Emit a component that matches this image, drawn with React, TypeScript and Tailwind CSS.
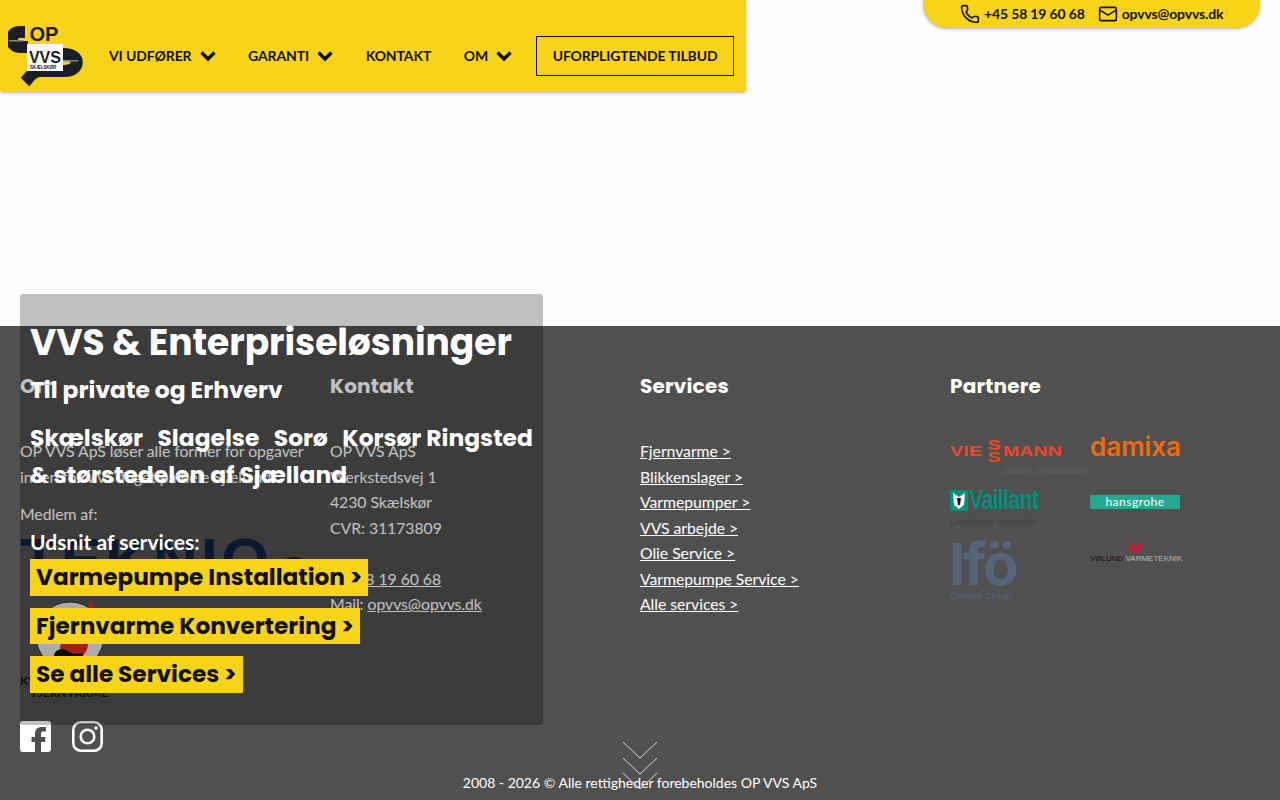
import { Mail, Phone } from 'lucide-react'

const NAV = [
  { label: 'VI UDFØRER', menu: true },
  { label: 'GARANTI', menu: true },
  { label: 'KONTAKT', menu: false },
  { label: 'OM', menu: true },
]

const SERVICES = [
  'Fjernvarme >',
  'Blikkenslager >',
  'Varmepumper >',
  'VVS arbejde >',
  'Olie Service >',
  'Varmepumpe Service >',
  'Alle services >',
]

const HEADING = "font-['Poppins',sans-serif] text-[20px] leading-[30px] font-bold tracking-[0.2px] text-white"
const CTA = "self-start bg-[#f8d419] px-1.5 font-['Poppins',sans-serif] text-[23.2px] leading-[36.5px] font-bold whitespace-nowrap text-[#111]"

function Chevron() {
  return (
    <svg viewBox="0 0 16 12" className="h-[12px] w-[16px]" fill="none" stroke="#111" strokeWidth="3.4">
      <path d="M1.5 2.5 L8 9 L14.5 2.5" />
    </svg>
  )
}

function Logo() {
  return (
    <svg viewBox="0 0 76 62" className="h-[62px] w-[76px] shrink-0">
      <path d="M17 7 H12 C0 7 2 22 12 22 H20" fill="none" stroke="#1d1d26" strokeWidth="12" />
      <path d="M47 29 H56 C73 29 73 46 56 46 H32 C24 46 21 53 17 57" fill="none" stroke="#1d1d26" strokeWidth="12" />
      <rect x="1" y="15" width="14" height="1.5" fill="#888" />
      <rect x="55" y="35" width="15" height="1.5" fill="#888" />
      <text x="21.5" y="16" fontFamily="Liberation Sans" fontWeight="700" fontSize="20" fill="#1d1d26">OP</text>
      <rect x="19" y="19" width="36" height="27" fill="#fff" />
      <text x="21" y="38" fontFamily="Liberation Sans" fontWeight="700" fontSize="16" fill="#1d1d26">VVS</text>
      <text x="22" y="43.5" fontFamily="Liberation Sans" fontWeight="700" fontSize="4.6" fill="#1d1d26">SKÆLSKØR</text>
    </svg>
  )
}

function Partners() {
  return (
    <div className="mt-[37px] grid w-[230px] grid-cols-[140px_90px] font-['Liberation_Sans',sans-serif] tracking-normal">
      <div className="h-[52px]">
        <div className="flex h-[25px] items-center text-[14px] leading-[14px] font-bold text-[#f2462a]">
          <span className="inline-block w-[33px] origin-left scale-x-[1.4] tracking-[0.2px]">VIE</span>
          <span className="ml-[5px] flex w-[12px] scale-x-[1.4] flex-col text-center leading-[12px]">
            <span>S</span>
            <span>S</span>
          </span>
          <span className="ml-[3px] inline-block w-[59px] origin-left scale-x-[1.4]">MANN</span>
        </div>
        <div className="mt-[2px] pl-[52px] text-[9.6px] leading-[12px] whitespace-nowrap text-[#5e5e5e]">climate of innovation</div>
      </div>
      <div className="h-[52px] font-['Inter',sans-serif] text-[26px] leading-[18px] font-semibold text-[#ef6c0f]">damixa</div>
      <div className="h-[52px]">
        <div className="flex items-center gap-[1px]">
          <svg viewBox="0 0 18 21" className="h-[21px] w-[18px]">
            <rect width="18" height="21" fill="#00917a" />
            <path d="M3 3 L9 7 L15 3 L14 15 L9 19 L4 15 Z" fill="#fff" />
            <path d="M7 8 H11 L10 15 H8 Z" fill="#111" />
          </svg>
          <span className="inline-block origin-left scale-x-[0.8] text-[27px] leading-[21px] font-bold tracking-[-1px] text-[#00917a]">Vaillant</span>
        </div>
        <div className="mt-[6px] text-[9px] leading-[10px] whitespace-nowrap text-[#444]">Certificeret forhandler</div>
      </div>
      <div className="flex h-[52px] items-start pt-[5px]">
        <div className="h-[14px] w-[90px] bg-[#26a88f] text-center font-['Lato',sans-serif] text-[12px] leading-[13px] tracking-[0.5px] text-white">hansgrohe</div>
      </div>
      <div>
        <div className="-ml-[1px] font-['Inter',sans-serif] text-[58px] leading-[44px] font-bold tracking-[-2px] text-[#56647c]">Ifö</div>
        <div className="mt-[3px] text-[9.7px] leading-[14px] text-[#55647d]">Geberit Group</div>
      </div>
      <div className="flex flex-col items-center">
        <svg viewBox="0 0 14 12" className="h-[12px] w-[14px]">
          <path d="M0 0 L6 4 L6 12 L2 9 Z M14 0 L8 4 L8 12 L12 9 Z" fill="#e0102e" />
        </svg>
        <div className="w-[90px] text-[8px] leading-[9px] whitespace-nowrap text-[#111]">
          VØLUND <span className="text-[#bbb]">VARMETEKNIK</span>
        </div>
      </div>
    </div>
  )
}

export default function App() {
  return (
    <div className="relative h-[800px] overflow-hidden bg-[#fdfdfd] font-['Lato',sans-serif] text-[15.8px] leading-[25.5px] tracking-[-0.05px] text-white">
      <div className="h-[326px]" />

      <footer className="relative h-[474px] bg-[#505050] px-5 pt-[45px]">
        <div className="grid grid-cols-4">
          <div className="pr-[5px]">
            <h3 className={HEADING}>Om</h3>
            <p className="mt-[37px]">OP VVS ApS løser alle former for opgaver inden for VVS-faget på hele Sjælland.</p>
            <p className="mt-[12px]">Medlem af:</p>
            <div className="mt-[7px] flex h-[64px] items-baseline font-['Liberation_Sans',sans-serif] text-[62px] leading-[52px] font-bold tracking-[3px] whitespace-nowrap text-[#0c2340]">
              TEKNIQ<span className="ml-[9px] text-[44px] tracking-normal">s</span>
            </div>
            <div className="w-[88px] pl-[15px]">
              <svg viewBox="0 0 70 72" className="h-[72px] w-[70px]">
                <circle cx="35" cy="38" r="34" fill="#e2e2e2" stroke="#333" />
                <path d="M42 20 C50 16 54 8 57 0 C59 14 54 24 50 30 C56 42 54 58 42 60 C30 60 22 54 26 46 C30 38 32 28 42 20 Z" fill="#d9281e" />
                <path d="M19 58 C20 50 30 50 34 54 C42 58 46 54 48 56 C48 68 24 72 19 58 Z" fill="#111" />
              </svg>
            </div>
            <div className="mt-[5px] text-[12px] leading-[12px] font-bold whitespace-nowrap text-[#111]">KVIK</div>
            <div className="pl-[12px] text-[12px] leading-[12px] font-bold whitespace-nowrap text-[#111]">FJERNVARME</div>
            <div className="mt-[22px] flex items-center gap-[21px]">
              <svg viewBox="0 0 31 31" className="h-[31px] w-[31px]">
                <path
                  fillRule="evenodd"
                  d="M3 0 H28 A3 3 0 0 1 31 3 V28 A3 3 0 0 1 28 31 H3 A3 3 0 0 1 0 28 V3 A3 3 0 0 1 3 0 Z M21 31 V21 H25 L25.5 16 H21 V13 C21 11 22 10.5 24 10.5 H26 V6 H22 C17.5 6 15 8.5 15 13 V16 H11.5 V21 H15 V31 Z"
                  fill="#fff"
                />
              </svg>
              <svg viewBox="0 0 31 31" className="h-[31px] w-[31px]" fill="none" stroke="#fff" strokeWidth="2.6">
                <rect x="1.3" y="1.3" width="28.4" height="28.4" rx="7.5" />
                <circle cx="15.5" cy="15.5" r="6.8" />
                <circle cx="24" cy="7" r="1.8" fill="#fff" stroke="none" />
              </svg>
            </div>
          </div>

          <div>
            <h3 className={HEADING}>Kontakt</h3>
            <div className="mt-[37px]">
              <div>OP VVS ApS</div>
              <div>Werkstedsvej 1</div>
              <div>4230 Skælskør</div>
              <div>CVR: 31173809</div>
              <div className="h-[25.5px]" />
              <div>
                Tlf: <span className="underline">58 19 60 68</span>
              </div>
              <div>
                Mail: <span className="underline">opvvs@opvvs.dk</span>
              </div>
            </div>
          </div>

          <div>
            <h3 className={HEADING}>Services</h3>
            <ul className="mt-[37px]">
              {SERVICES.map((s) => (
                <li key={s} className="underline">
                  {s}
                </li>
              ))}
            </ul>
          </div>

          <div>
            <h3 className={HEADING}>Partnere</h3>
            <Partners />
          </div>
        </div>

        <div className="absolute right-0 bottom-[4px] left-0 text-center text-[14px] leading-[26px] tracking-normal">
          2008 - 2026 © Alle rettigheder forebeholdes OP VVS ApS
        </div>
        <svg viewBox="0 0 36 60" className="absolute bottom-0 left-[622px] h-[60px] w-[36px]" fill="none" stroke="#ddd" strokeWidth="1">
          <path d="M1 2 L18 18 L35 2 M1 18 L18 34 L35 18 M1 33 L18 49 L35 33" />
        </svg>
      </footer>

      <div className="absolute top-[294px] left-5 flex h-[431px] w-[523px] flex-col rounded-[3px] bg-black/[.24] px-2.5 font-['Poppins',sans-serif] tracking-normal">
        <h1 className="mt-[24px] text-[36px] leading-[50px] font-bold whitespace-nowrap">VVS &amp; Enterpriseløsninger</h1>
        <h2 className="mt-[4px] text-[23.4px] leading-[36px] font-bold">Til private og Erhverv</h2>
        <h2 className="mt-[12px] text-[23.4px] leading-[36.5px] font-bold whitespace-nowrap">
          <span className="flex gap-[14.5px]">
            <span>Skælskør</span>
            <span>Slagelse</span>
            <span>Sorø</span>
            <span>Korsør Ringsted</span>
          </span>
          &amp; størstedelen af Sjælland
        </h2>
        <div className="mt-[34px] font-['Lato',sans-serif] text-[21px] leading-[30px] font-bold">Udsnit af services:</div>
        <div className="mt-[2px] flex flex-col gap-[12px]">
          <div className={CTA}>Varmepumpe Installation &gt;</div>
          <div className={CTA}>Fjernvarme Konvertering &gt;</div>
          <div className={CTA}>Se alle Services &gt;</div>
        </div>
      </div>

      <header className="absolute top-0 left-0 flex h-[92px] w-[746px] items-center rounded-b-[3px] bg-[#f8d419] pt-[20px] pl-[8px] text-[14px] font-bold tracking-[-0.1px] text-[#111] shadow-[0_1px_3px_rgba(0,0,0,0.3)]">
        <Logo />
        <nav className="ml-[25px] flex items-center gap-[32.5px]">
          {NAV.map((n) => (
            <span key={n.label} className="flex items-center gap-2 whitespace-nowrap">
              {n.label}
              {n.menu && <Chevron />}
            </span>
          ))}
          <span className="-ml-[9px] flex h-10 items-center border border-[#111] px-4 tracking-[-0.15px] whitespace-nowrap">UFORPLIGTENDE TILBUD</span>
        </nav>
      </header>

      <div className="absolute top-0 left-[923px] flex h-[28px] w-[337px] items-center gap-[13px] rounded-b-[24px] bg-[#f8d419] pl-[37px] text-[14px] font-bold tracking-[-0.15px] text-[#111] shadow-[0_1px_3px_rgba(0,0,0,0.3)]">
        <span className="flex items-center gap-[4px] whitespace-nowrap">
          <Phone className="h-[20px] w-[20px]" strokeWidth={2} />
          +45 58 19 60 68
        </span>
        <span className="flex items-center gap-[4px] whitespace-nowrap">
          <Mail className="h-[20px] w-[20px]" strokeWidth={2} />
          opvvs@opvvs.dk
        </span>
      </div>
    </div>
  )
}
